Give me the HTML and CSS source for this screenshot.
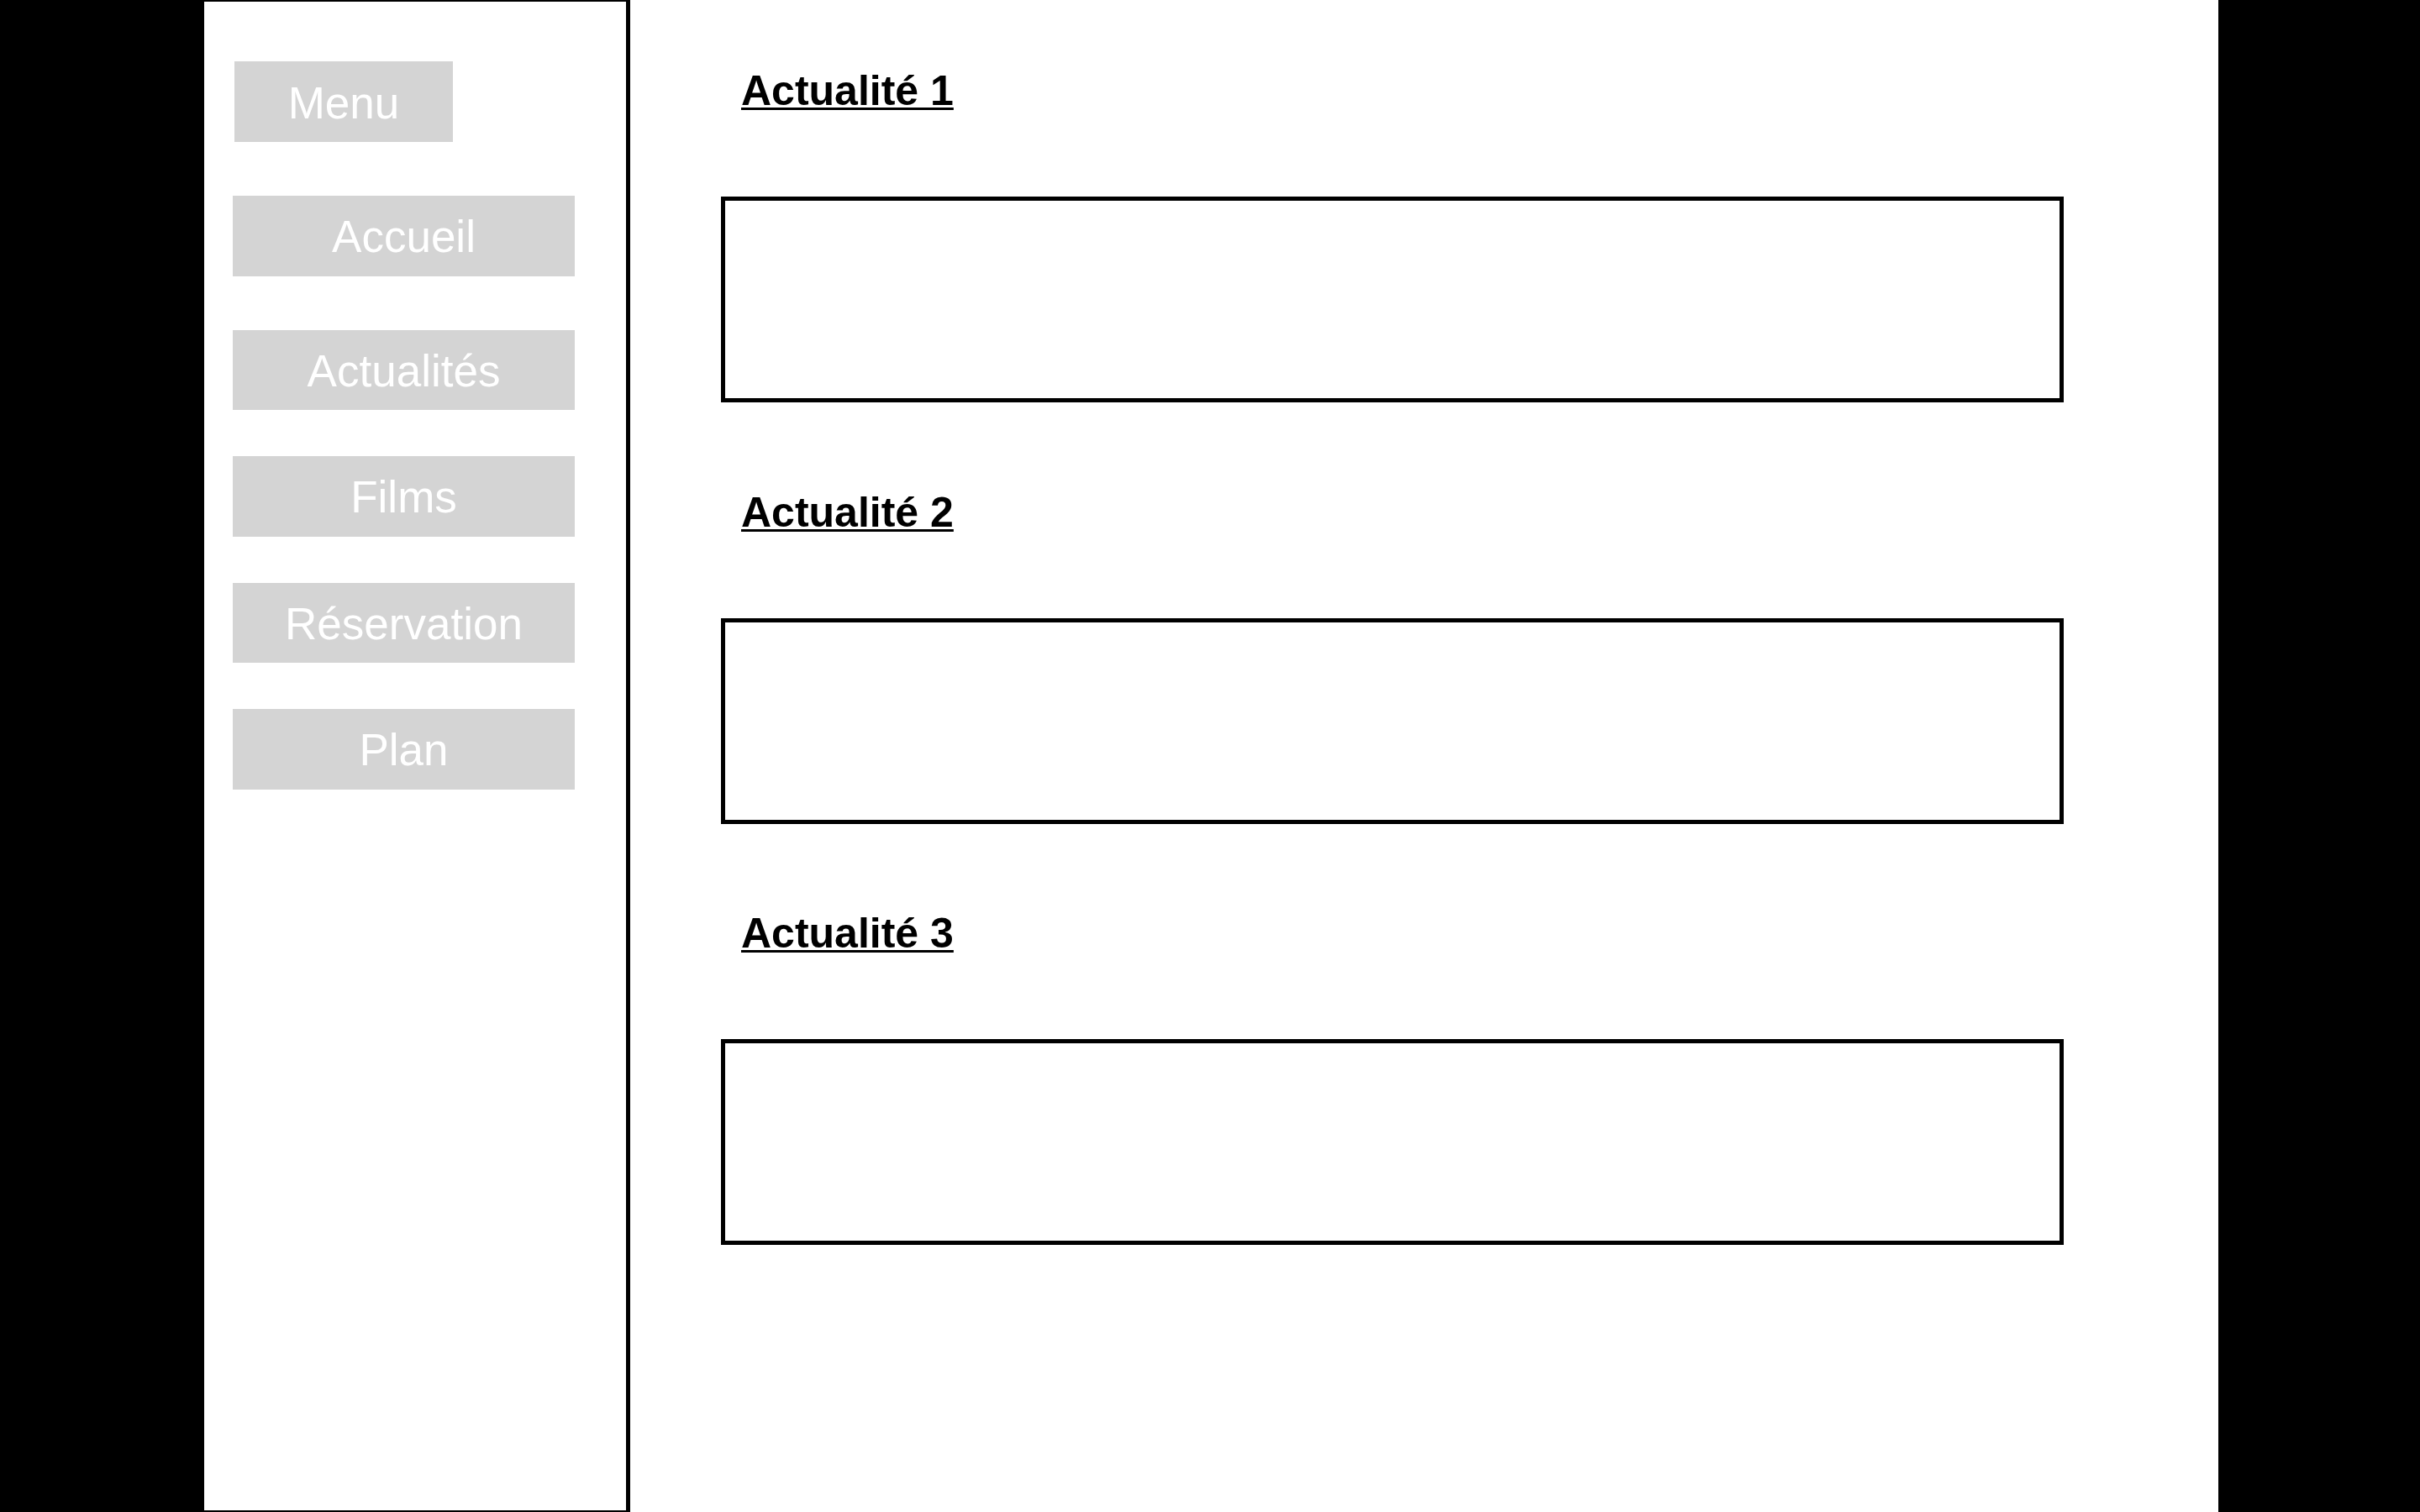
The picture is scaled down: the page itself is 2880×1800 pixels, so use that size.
FILE: index.html
```html
<!DOCTYPE html>
<html lang="fr">
<head>
<meta charset="utf-8">
<title>Actualités</title>
<link rel="stylesheet" href="styles.css">
</head>
<body>
<div class="page">
  <aside class="sidebar">
    <div class="menu-btn">Menu</div>
    <nav class="nav">
      <a class="nav-item nav-first">Accueil</a>
      <a class="nav-item">Actualités</a>
      <a class="nav-item">Films</a>
      <a class="nav-item">Réservation</a>
      <a class="nav-item">Plan</a>
    </nav>
  </aside>
  <main class="main">
    <section class="news">
      <h2 class="news-title">Actualité 1</h2>
      <div class="news-box"></div>
    </section>
    <section class="news">
      <h2 class="news-title">Actualité 2</h2>
      <div class="news-box"></div>
    </section>
    <section class="news">
      <h2 class="news-title">Actualité 3</h2>
      <div class="news-box"></div>
    </section>
  </main>
</div>
</body>
</html>
```
FILE: styles.css
```css
html, body {
  margin: 0;
  padding: 0;
  height: 100%;
}
body {
  background: #000;
  font-family: "Liberation Sans", Arial, Helvetica, sans-serif;
  display: flex;
}
.page {
  margin-left: 243px;
  width: 2397px;
  height: 1800px;
  background: #fff;
  display: flex;
}
.sidebar {
  box-sizing: border-box;
  width: 507px;
  height: 100%;
  border-top: 2px solid #000;
  border-right: 5px solid #000;
  border-bottom: 2px solid #000;
  padding: 71px 0 0 34px;
  display: flex;
  flex-direction: column;
  align-items: flex-start;
}
.menu-btn {
  margin-left: 2px;
  width: 260px;
  height: 96px;
  line-height: 99px;
  background: #d4d4d4;
  color: #fff;
  font-size: 53px;
  text-align: center;
}
.nav {
  margin-top: 64px;
  display: flex;
  flex-direction: column;
  gap: 55px;
}
.nav-item {
  display: block;
  width: 407px;
  height: 95.5px;
  line-height: 98px;
  background: #d4d4d4;
  color: #fff;
  font-size: 53px;
  text-align: center;
  text-decoration: none;
}
.nav-first {
  margin-bottom: 9px;
}
.main {
  flex: 1;
  padding: 78px 0 0 108px;
  display: flex;
  flex-direction: column;
  gap: 100.5px;
}
.news {
  display: flex;
  flex-direction: column;
}
.news-title {
  margin: 0 0 96px 24px;
  font-size: 50px;
  line-height: 60px;
  font-weight: bold;
  color: #000;
  text-decoration: underline;
  text-decoration-thickness: 3px;
  text-underline-offset: 3px;
}
.news-box {
  box-sizing: border-box;
  width: 1598px;
  height: 245px;
  border: 5px solid #000;
}
```
